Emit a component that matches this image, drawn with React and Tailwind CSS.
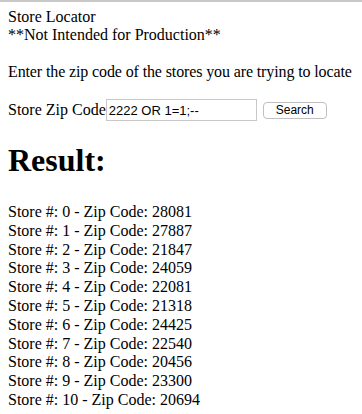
// Store locator page — plain browser-default look
export default function App() {
  const stores = [
    { id: 0, zip: '28081' },
    { id: 1, zip: '27887' },
    { id: 2, zip: '21847' },
    { id: 3, zip: '24059' },
    { id: 4, zip: '22081' },
    { id: 5, zip: '21318' },
    { id: 6, zip: '24425' },
    { id: 7, zip: '22540' },
    { id: 8, zip: '20456' },
    { id: 9, zip: '23300' },
    { id: 10, zip: '20694' },
  ];

  return (
    <div className="min-h-screen bg-white border-t-2 border-[#c8c8c8] text-black font-['Liberation_Serif',serif] text-[16px] leading-[18px]">
      <div className="px-2 pt-[6px]">
        {/* header */}
        <div>Store Locator</div>
        <div>**Not Intended for Production**</div>

        <p className="mt-[19px] whitespace-nowrap tracking-[-0.12px]">
          Enter the zip code of the stores you are trying to locate
        </p>

        {/* search form */}
        <div className="mt-[18px] flex items-center">
          <span className="whitespace-nowrap">Store Zip Code</span>
          <input
            defaultValue="2222 OR 1=1;--"
            className="w-[151px] h-[22px] border border-[#c8c8c8] px-[2px] text-[13px] font-['Liberation_Sans',sans-serif] outline-none"
          />
          <button className="ml-[6px] w-[64px] h-[17px] rounded-[4px] border border-[#c0c0c0] bg-white text-[12px] leading-none font-['Liberation_Sans',sans-serif]">
            Search
          </button>
        </div>

        {/* result */}
        <h1 className="mt-[21px] text-[32px] leading-[37px] font-bold">Result:</h1>

        <div className="mt-[24px] leading-[18.8px]">
          {stores.map((s) => (
            <div key={s.id}>Store #: {s.id} - Zip Code: {s.zip}</div>
          ))}
        </div>
      </div>
    </div>
  );
}
